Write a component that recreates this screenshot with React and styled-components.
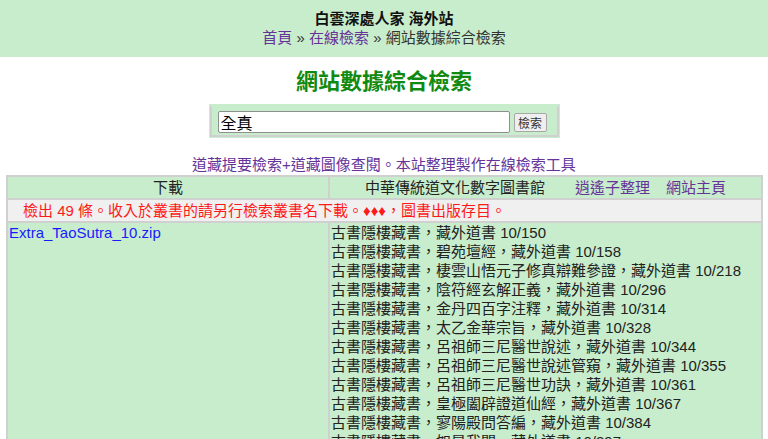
import React from 'react';
import styled, { createGlobalStyle } from 'styled-components';

const GlobalStyle = createGlobalStyle`
    html, body {
        margin: 0;
        padding: 0;
        background: #ffffff;
        font-family: "Liberation Sans", Arial, "Noto Sans CJK TC", sans-serif;
        font-size: 15px;
        color: #222222;
    }
`;

const books = [
    '古書隱樓藏書，藏外道書 10/150',
    '古書隱樓藏書，碧苑壇經，藏外道書 10/158',
    '古書隱樓藏書，棲雲山悟元子修真辯難參證，藏外道書 10/218',
    '古書隱樓藏書，陰符經玄解正義，藏外道書 10/296',
    '古書隱樓藏書，金丹四百字注釋，藏外道書 10/314',
    '古書隱樓藏書，太乙金華宗旨，藏外道書 10/328',
    '古書隱樓藏書，呂祖師三尼醫世說述，藏外道書 10/344',
    '古書隱樓藏書，呂祖師三尼醫世說述管窺，藏外道書 10/355',
    '古書隱樓藏書，呂祖師三尼醫世功訣，藏外道書 10/361',
    '古書隱樓藏書，皇極闔辟證道仙經，藏外道書 10/367',
    '古書隱樓藏書，寥陽殿問答編，藏外道書 10/384',
    '古書隱樓藏書，如是我聞，藏外道書 10/397',
];

function App() {
    return (
        <>
            <GlobalStyle />
            <Header>
                <SiteName>白雲深處人家 海外站</SiteName>
                <Crumbs>
                    <NavLink href="#">首頁</NavLink> » <NavLink href="#">在線檢索</NavLink> » 網站數據綜合檢索
                </Crumbs>
            </Header>
            <PageTitle>網站數據綜合檢索</PageTitle>
            <SearchBox>
                <SearchInput defaultValue="全真" />
                <SearchButton>檢索</SearchButton>
            </SearchBox>
            <Intro>道藏提要檢索+道藏圖像查閱。本站整理製作在線檢索工具</Intro>
            <ResultTable>
                <tbody>
                    <tr>
                        <HeadCell $w="320px">下載</HeadCell>
                        <HeadCell>
                            中華傳統道文化數字圖書館
                            <HeadLink href="#" $gap="30px">逍遙子整理</HeadLink>
                            <HeadLink href="#" $gap="16px">網站主頁</HeadLink>
                        </HeadCell>
                    </tr>
                    <tr>
                        <NoticeCell colSpan={2}>
                            檢出 49 條。收入於叢書的請另行檢索叢書名下載。♦♦♦，圖書出版存目。
                        </NoticeCell>
                    </tr>
                    <tr>
                        <BodyCell>
                            <FileLink href="#">Extra_TaoSutra_10.zip</FileLink>
                        </BodyCell>
                        <BodyCell>
                            {books.map((b) => (
                                <BookLine key={b}>{b}</BookLine>
                            ))}
                        </BodyCell>
                    </tr>
                </tbody>
            </ResultTable>
        </>
    );
}

const Header = styled.header`
    background: #c8edcc;
    padding: 9px 0 10px;
    text-align: center;
    line-height: 19px;
`;

const SiteName = styled.div`
    font-weight: bold;
    color: #111111;
`;

const Crumbs = styled.div`
    color: #333333;
`;

const NavLink = styled.a`
    color: #663399;
    text-decoration: none;
`;

const PageTitle = styled.h1`
    margin: 10px 0 8px;
    font-size: 22px;
    line-height: 30px;
    font-weight: bold;
    color: #108a10;
    text-align: center;
`;

const SearchBox = styled.div`
    width: 331px;
    margin: 0 auto;
    display: flex;
    align-items: center;
    gap: 4px;
    padding: 3px 8px 1px 6px;
    height: 24px;
    background: #c8edcc;
    border: 2px solid #d0d0d0;
    border-top-color: #c8edcc;
    box-shadow: 0 0 0 1px #c8edcc;
`;

const SearchInput = styled.input`
    width: 286px;
    height: 18px;
    padding: 1px 2px;
    border: 1px solid #8f8f8f;
    border-radius: 2px;
    font-family: "Liberation Sans", Arial, "Noto Sans CJK TC", sans-serif;
    font-size: 16px;
    color: #000000;
    outline: none;
`;

const SearchButton = styled.button`
    width: 33px;
    height: 19px;
    padding: 0;
    font-family: "Noto Sans CJK TC", sans-serif;
    font-size: 12px;
    line-height: 15px;
    color: #333333;
    background: #efefef;
    border: 1px solid #a8a8a8;
    border-radius: 2px;
`;

const Intro = styled.div`
    margin-top: 18px;
    text-align: center;
    line-height: 19px;
    color: #663399;
`;

const ResultTable = styled.table`
    width: calc(100% - 11px);
    margin: 1px 5px 0 6px;
    background: #d0d0d0;
    border-collapse: separate;
    border-spacing: 2px;
    line-height: 19px;
`;

const HeadCell = styled.td`
    width: ${(p) => p.$w || 'auto'};
    padding: 1px 0;
    background: #c8edcc;
    text-align: center;
    color: #222222;
`;

const HeadLink = styled.a`
    margin-left: ${(p) => p.$gap};
    color: #663399;
    text-decoration: none;
`;

const NoticeCell = styled.td`
    padding: 1px 0 1px 15px;
    background: #f0f0f0;
    color: #ff1a1a;
`;

const BodyCell = styled.td`
    vertical-align: top;
    padding: 0 1px;
    background: #c8edcc;
`;

const FileLink = styled.a`
    color: #1a1aff;
    text-decoration: none;
`;

const BookLine = styled.div`
    white-space: nowrap;
`;

export default App;
